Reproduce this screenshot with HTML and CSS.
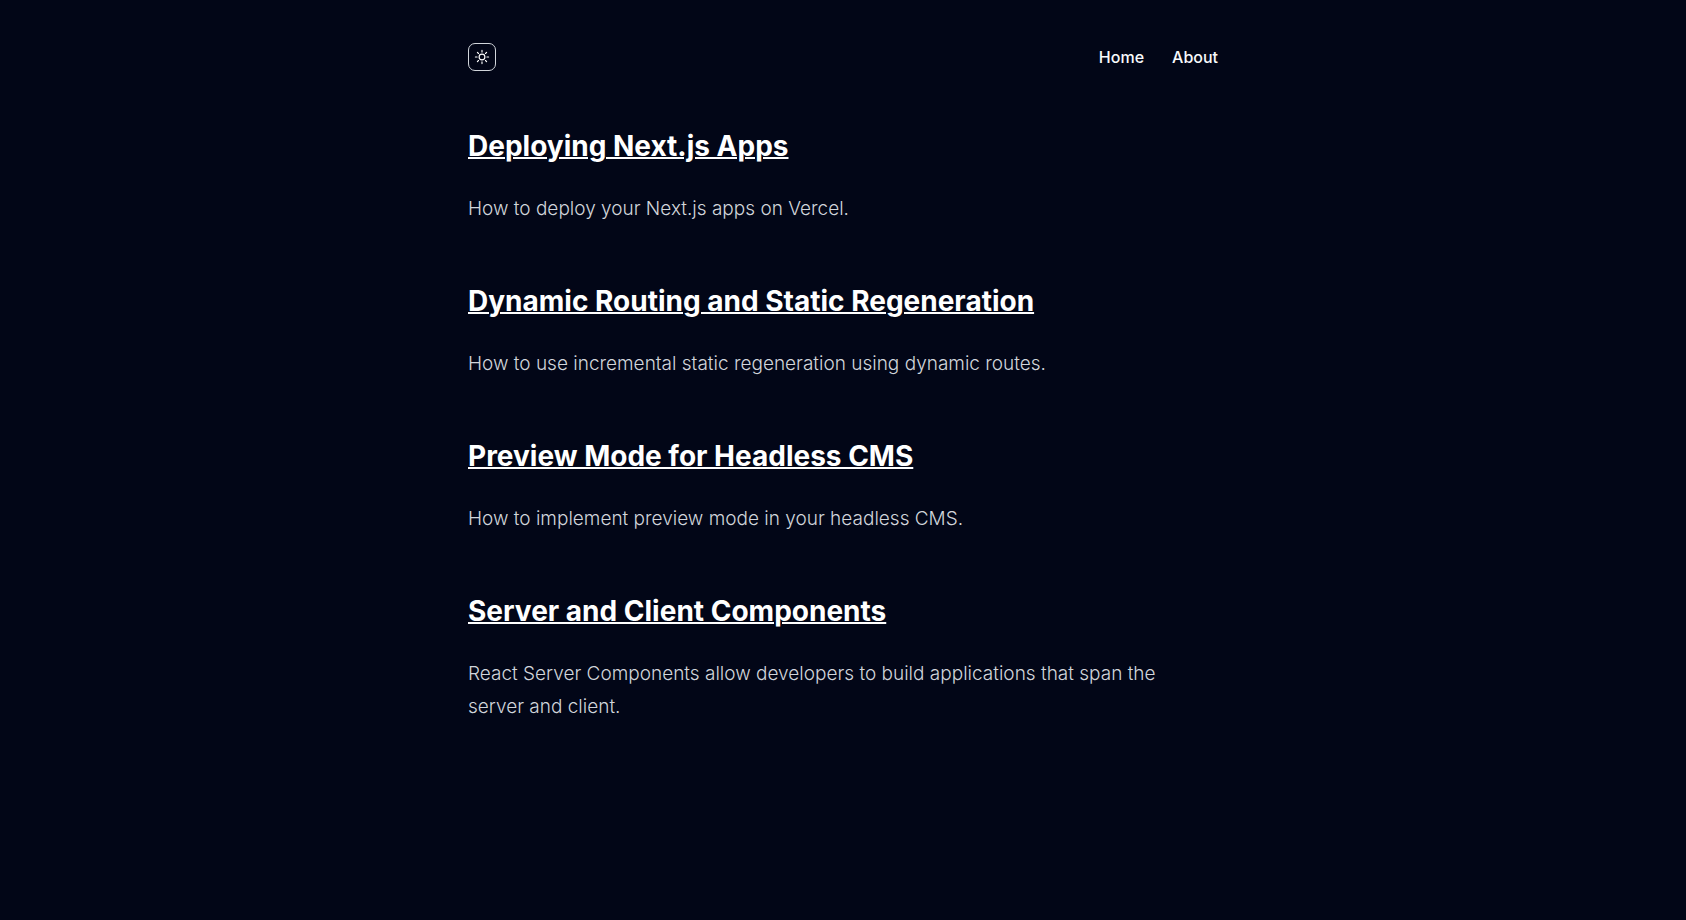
FILE: index.html
```html
<!DOCTYPE html>
<html lang="en">
<head>
<meta charset="utf-8">
<meta name="viewport" content="width=device-width, initial-scale=1">
<title>Blog</title>
<link rel="stylesheet" href="styles.css">
</head>
<body>
<div class="container">
  <header class="header">
    <button class="mode-toggle" type="button" aria-label="Toggle color mode">
      <svg class="sun" viewBox="0 0 16 16" fill="none" stroke="currentColor" stroke-width="1.15" stroke-linecap="round" aria-hidden="true"><circle cx="8" cy="8" r="2.9"/><path d="M8 1.4v1.7M8 12.9v1.7M1.4 8h1.7M12.9 8h1.7M3.4 3.4l1.1 1.1M11.5 11.5l1.1 1.1M3.4 12.6l1.1-1.1M11.5 4.5l1.1-1.1"/></svg>
    </button>
    <nav class="nav">
      <a href="#">Home</a>
      <a href="#">About</a>
    </nav>
  </header>
  <main class="posts">
    <article class="post">
      <h2><a href="#">Deploying Next.js Apps</a></h2>
      <p>How to deploy your Next.js apps on Vercel.</p>
    </article>
    <article class="post">
      <h2><a href="#">Dynamic Routing and Static Regeneration</a></h2>
      <p>How to use incremental static regeneration using dynamic routes.</p>
    </article>
    <article class="post">
      <h2><a href="#">Preview Mode for Headless CMS</a></h2>
      <p>How to implement preview mode in your headless CMS.</p>
    </article>
    <article class="post">
      <h2><a href="#">Server and Client Components</a></h2>
      <p>React Server Components allow developers to build applications that span the server and client.</p>
    </article>
  </main>
</div>
</body>
</html>
```
FILE: styles.css
```css
* { box-sizing: border-box; }
body {
  margin: 0;
  min-height: 100vh;
  background: #020617;
  color: #f8fafc;
  font-family: Inter, sans-serif;
  -webkit-font-smoothing: antialiased;
}
.container {
  max-width: 750px;
  margin: 0 auto;
  padding: 39px 0;
}
.header {
  display: flex;
  align-items: center;
  justify-content: space-between;
  margin: 0 0 51px;
}
.mode-toggle {
  display: flex;
  align-items: center;
  justify-content: center;
  width: 28px;
  height: 28px;
  padding: 0;
  border: 1px solid #d1d5db;
  border-radius: 7px;
  background: transparent;
  color: #fff;
  cursor: pointer;
}
.sun { width: 16px; height: 16px; }
.nav {
  display: flex;
  gap: 28px;
  font-size: 16px;
  font-weight: 500;
  line-height: 36px;
}
.nav a { color: inherit; text-decoration: none; }
.post h2 {
  margin: 0 0 26px;
  font-size: 28px;
  font-weight: 700;
  line-height: 40px;
}
.post h2 a { color: #fff; text-decoration-thickness: 2px; }
.post p {
  max-width: 740px;
  margin: 0 0 56px;
  color: #d1d5db;
  font-size: 19px;
  font-weight: 350;
  line-height: 33px;
}
```
